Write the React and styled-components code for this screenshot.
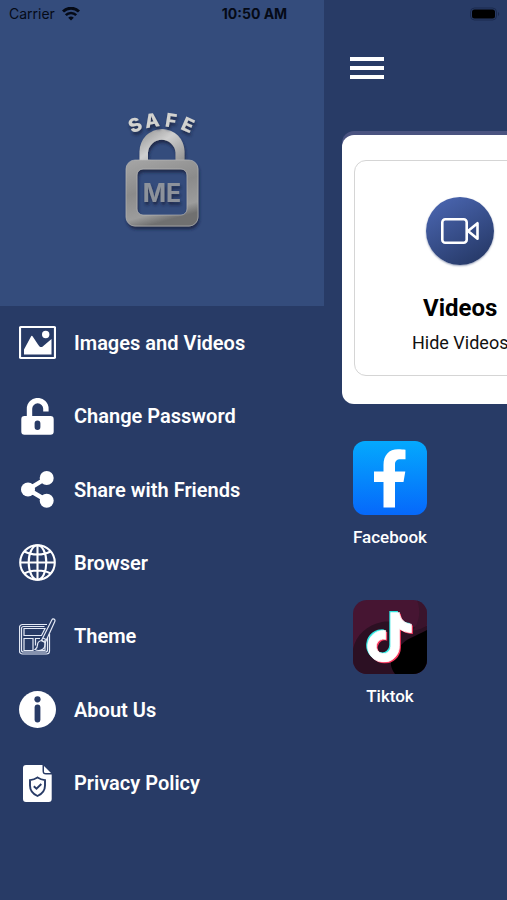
import React from 'react';
import { FaTiktok } from 'react-icons/fa';
import styled, { createGlobalStyle } from 'styled-components';

const MENU = [
  { label: 'Images and Videos', Icon: ImageIcon },
  { label: 'Change Password', Icon: UnlockIcon },
  { label: 'Share with Friends', Icon: ShareIcon },
  { label: 'Browser', Icon: GlobeIcon },
  { label: 'Theme', Icon: ThemeIcon },
  { label: 'About Us', Icon: InfoIcon },
  { label: 'Privacy Policy', Icon: PolicyIcon }
];

const APPS = [
  { name: 'Facebook', Icon: FacebookTile },
  { name: 'Tiktok', Icon: TiktokTile }
];

const App = () => {
  return (
    <Screen>
      <GlobalStyle />
      <StatusBar>
        <Carrier>
          Carrier
          <WifiIcon />
        </Carrier>
        <Clock>10:50 AM</Clock>
        <BatteryIcon />
      </StatusBar>
      <Drawer>
        <DrawerHeader>
          <Logo />
        </DrawerHeader>
        <Menu>
          {MENU.map(({ label, Icon }) => (
            <MenuItem key={label} type="button">
              <Icon />
              {label}
            </MenuItem>
          ))}
        </Menu>
      </Drawer>
      <Pushed>
        <Home>
          <MenuButton type="button" aria-label="Menu">
            <Bar />
            <Bar />
            <Bar />
          </MenuButton>
          <Panel>
            <VaultCard type="button">
              <VideoIcon />
              <VaultTitle>Videos</VaultTitle>
              <VaultText>Hide Videos</VaultText>
            </VaultCard>
          </Panel>
          <AppList>
            {APPS.map(({ name, Icon }) => (
              <AppLink key={name} href="#">
                <Icon />
                {name}
              </AppLink>
            ))}
          </AppList>
        </Home>
      </Pushed>
    </Screen>
  );
};

function WifiIcon() {
  return (
    <svg width="18" height="14" viewBox="0 0 18 14" fill="none" stroke="#050a16">
      <path d="M1 4.500a11.500 11.500 0 0 1 16 0" strokeWidth="3" />
      <path d="M3.800 8.200a7.400 7.400 0 0 1 10.400 0" strokeWidth="2.600" />
      <path d="M6.200 10.800a4 4 0 0 1 5.600 0L9 13.600z" fill="#050a16" stroke="none" />
    </svg>
  );
}

function BatteryIcon() {
  return (
    <svg width="30" height="14" viewBox="0 0 30 14">
      <rect x="0.500" y="1" width="26" height="12" rx="4" fill="none" stroke="#1b2a4e" />
      <rect x="2" y="2.500" width="23" height="9" rx="2.500" fill="#000" />
      <path d="M28 5v4c1.600-.5 1.600-3.500 0-4z" fill="#1b2a4e" />
    </svg>
  );
}

function Logo() {
  return (
    <svg width="90" height="130" viewBox="117 105 90 130">
      <defs>
        <linearGradient id="steel" x1="0" y1="0" x2="0.3" y2="1">
          <stop offset="0" stopColor="#a6a6a6" />
          <stop offset="0.5" stopColor="#8b8b8b" />
          <stop offset="0.85" stopColor="#9c9c9c" />
          <stop offset="1" stopColor="#6f6f6f" />
        </linearGradient>
        <linearGradient id="shackle" x1="0" y1="0" x2="1" y2="1">
          <stop offset="0" stopColor="#909090" />
          <stop offset="0.45" stopColor="#cfcfcf" />
          <stop offset="1" stopColor="#8f8f8f" />
        </linearGradient>
        <filter id="drop" x="-20%" y="-20%" width="140%" height="140%">
          <feDropShadow dx="1" dy="3" stdDeviation="1.5" floodColor="#15203c" floodOpacity="0.8" />
        </filter>
      </defs>
      <g filter="url(#drop)">
        <path
          d="M139.500 162v-10.500a22.500 22.500 0 0 1 45 0V162h-9v-9.500a13.800 13.800 0 0 0-27.500 0V162z"
          fill="url(#shackle)"
        />
        <path
          fillRule="evenodd"
          d="M135 160h54a9 9 0 0 1 9 9v48a9 9 0 0 1-9 9h-54a9 9 0 0 1-9-9v-48a9 9 0 0 1 9-9zM143 169a6 6 0 0 0-6 6v34a6 6 0 0 0 6 6h38a6 6 0 0 0 6-6v-34a6 6 0 0 0-6-6z"
          fill="url(#steel)"
          stroke="#bdbdbd"
          strokeWidth="0.600"
        />
      </g>
      <g
        fontFamily="Inter, sans-serif"
        fontWeight="700"
        textAnchor="middle"
        filter="url(#drop)"
      >
        <text x="162" y="202" fontSize="25" fill="#8d929b">ME</text>
        <g fontSize="19" fontWeight="800" fill="#d2d2cf">
          <text transform="translate(138 131) rotate(-25)">S</text>
          <text transform="translate(153 127) rotate(-9)">A</text>
          <text transform="translate(170 127) rotate(9)">F</text>
          <text transform="translate(185 131) rotate(24)">E</text>
        </g>
      </g>
    </svg>
  );
}

function ImageIcon() {
  return (
    <MenuSvg>
      <rect x="1" y="3" width="35" height="31" rx="1" fill="none" stroke="#fff" strokeWidth="2.200" />
      <path d="M5 30.500v-5l7-13c.5-.9 1.200-.9 1.700 0l5.300 8c1.500 2.300 3.200 3.600 5 1.700l8.500-7.200v15.500z" />
      <circle cx="26.700" cy="10.500" r="3.700" />
    </MenuSvg>
  );
}

function UnlockIcon() {
  return (
    <MenuSvg>
      <path
        d="M10.500 19v-8.200a8.200 8.200 0 0 1 16.400 0V13.500"
        fill="none"
        stroke="#fff"
        strokeWidth="5.400"
      />
      <path
        fillRule="evenodd"
        d="M5.500 18h26a3.200 3.200 0 0 1 3.200 3.200v12.300a3.200 3.200 0 0 1-3.200 3.200h-26a3.200 3.200 0 0 1-3.200-3.200V21.200A3.200 3.200 0 0 1 5.500 18zM15.600 25.500v3.500a2.900 2.900 0 0 0 5.800 0v-3.500a2.900 2.900 0 0 0-5.800 0z"
      />
    </MenuSvg>
  );
}

function ShareIcon() {
  return (
    <MenuSvg>
      <path d="M27.700 7L9 18.500l18.700 11" fill="none" stroke="#fff" strokeWidth="4.400" />
      <circle cx="9" cy="18.500" r="7" />
      <circle cx="27.700" cy="7" r="7" />
      <circle cx="27.700" cy="29.800" r="7" />
    </MenuSvg>
  );
}

function GlobeIcon() {
  return (
    <MenuSvg fill="none" stroke="#fff" strokeWidth="2.100">
      <circle cx="18.500" cy="18.500" r="17.300" />
      <ellipse cx="18.500" cy="18.500" rx="8.800" ry="17.300" />
      <path d="M18.500 1v35M1 18.500h35M5.500 7.500c7 4 19 4 26 0M5.500 29.500c7-4 19-4 26 0" />
    </MenuSvg>
  );
}

function ThemeIcon() {
  return (
    <MenuSvg fill="none" stroke="#e4e9f5" strokeWidth="1.200">
      <path d="M28 6.500H3.500a3 3 0 0 0-3 3v23.500a3 3 0 0 0 3 3h24a3 3 0 0 0 3-3V16" />
      <path d="M25.500 8.500H4.500a2 2 0 0 0-2 2v21.500a2 2 0 0 0 2 2h22a2 2 0 0 0 2-2V20" />
      <path d="M26 10.500H5v7h17.500zM5 20.500h9v12H5zM21 20.500h-4.500v7M26 22v10.500h-5" />
      <path d="M22.500 22.500L32.800 1.900c1-1.900 4-.6 3 1.500L26.300 24.500z" />
      <path d="M22.500 22.500c-2.500.5-4 2-4 4.500 0 2-.7 3.500-2.500 4.500 4 2.200 9 .5 9.800-3 .3-1.500.4-2.700.5-4z" />
      <path d="M24 20l3.500 1.800" />
    </MenuSvg>
  );
}

function InfoIcon() {
  return (
    <MenuSvg>
      <circle cx="18.500" cy="18.500" r="18.500" />
      <circle cx="18.500" cy="8.300" r="3.100" fill="#283b66" />
      <rect x="15.600" y="13.500" width="5.800" height="18" rx="2.900" fill="#283b66" />
    </MenuSvg>
  );
}

function PolicyIcon() {
  return (
    <MenuSvg>
      <path d="M7 0h16.500v6a3.500 3.500 0 0 0 3.500 3.500h5.700V34a3 3 0 0 1-3 3H7a3 3 0 0 1-3-3V3a3 3 0 0 1 3-3z" />
      <path d="M25 1l7 7h-5.500A1.500 1.500 0 0 1 25 6.500z" />
      <g fill="none" stroke="#283b66" strokeWidth="1.900">
        <path d="M18.500 12.500c2.300 1.500 4.600 2.300 7.500 2.600v5.400c0 5-3 8.500-7.500 10.500-4.500-2-7.500-5.500-7.500-10.500v-5.400c2.900-.3 5.200-1.100 7.500-2.600z" />
        <path d="M14.800 21.200l2.700 2.500 4.800-4.700" />
      </g>
    </MenuSvg>
  );
}

function VideoIcon() {
  return (
    <VideoCircle>
      <svg width="38" height="26" viewBox="0 0 38 26" fill="none" stroke="#fff" strokeWidth="2.600">
        <rect x="1.300" y="1.300" width="24.400" height="23.400" rx="3" />
        <path d="M27 13L36.500 5.200v15.600z" strokeLinejoin="round" />
      </svg>
    </VideoCircle>
  );
}

function FacebookTile() {
  return (
    <svg width="74" height="74" viewBox="0 0 74 74" aria-hidden="true">
      <defs>
        <linearGradient id="fb" x1="0" y1="0" x2="0" y2="1">
          <stop offset="0" stopColor="#04a9fd" />
          <stop offset="1" stopColor="#0668fb" />
        </linearGradient>
      </defs>
      <rect width="74" height="74" rx="12" fill="url(#fb)" />
      <path
        d="M30.500 66.500V41H21V30.500h9.500V24c0-10 5.500-15.800 14.500-15.800 3 0 5.500.2 7.500.5v9.600h-4.800c-4.200 0-5.700 2-5.700 5.400v6.800h10.300L50.500 41H42v25.500z"
        fill="#fff"
      />
    </svg>
  );
}

function TiktokTile() {
  return (
    <svg width="74" height="74" viewBox="0 0 74 74" aria-hidden="true">
      <clipPath id="tile">
        <rect width="74" height="74" rx="14" />
      </clipPath>
      <g clipPath="url(#tile)">
        <path d="M0 0h74v74H0z" fill="#461532" />
        <path d="M0 49C3 35 14 25 29 22c17-3 21 8 45 4v48H0z" fill="#2c1023" />
        <path d="M74 30c-12 7-22 8-28 18-5 9-13 13-4 26h32z" fill="#000" />
        <path d="M64 0c4 10 3 23-5 31 7-1 12-3 15-6V0z" fill="#3a142c" />
      </g>
      <FaTiktok x="10" y="11" size={50} color="#2ee6e0" />
      <FaTiktok x="13" y="13.500" size={50} color="#f7365c" />
      <FaTiktok x="11.500" y="12.200" size={50} color="#fff" stroke="#fff" strokeWidth="8" />
    </svg>
  );
}

const GlobalStyle = createGlobalStyle`
  body {
    margin: 0;
    background: #283b66;
  }
  * {
    box-sizing: border-box;
  }
  button {
    margin: 0;
    padding: 0;
    border: 0;
    background: none;
    font: inherit;
    color: inherit;
    cursor: pointer;
  }
`;

const Screen = styled.div`
  position: relative;
  display: flex;
  min-height: 100vh;
  overflow: hidden;
  background: #283b66;
  color: #fff;
  font-family: Roboto, sans-serif;
`;

const StatusBar = styled.div`
  position: absolute;
  top: 0;
  left: 0;
  right: 0;
  display: grid;
  grid-template-columns: 1fr auto 1fr;
  align-items: center;
  height: 27px;
  padding: 0 7px 0 9px;
  color: #050a16;
  font-family: Inter, sans-serif;
  font-size: 14px;

  > svg {
    justify-self: end;
  }
`;

const Carrier = styled.div`
  display: flex;
  align-items: center;
  gap: 7px;
`;

const Clock = styled.div`
  font-weight: 700;
`;

const Drawer = styled.nav`
  flex: 0 0 64%;
`;

const DrawerHeader = styled.div`
  display: flex;
  justify-content: center;
  height: 306px;
  padding-top: 105px;
  background: #344c7c;
`;

const Menu = styled.div`
  display: flex;
  flex-direction: column;
  height: 514px;
`;

const MenuItem = styled.button`
  flex: 1;
  display: flex;
  align-items: center;
  gap: 18px;
  && {
    padding: 0 19px;
    font-size: 20px;
    font-weight: 600;
  }
`;

const MenuSvg = styled.svg.attrs(props => ({
  viewBox: '0 0 37 37',
  fill: props.fill || '#fff',
  'aria-hidden': true
}))`
  flex: none;
  width: 37px;
  height: 37px;
`;

const Pushed = styled.main`
  flex: 1;
  min-width: 0;
  overflow: hidden;
`;

// keeps its full width while the drawer pushes it off to the right
const Home = styled.div`
  width: 100vw;
  padding: 57px 18px 0;
`;

const MenuButton = styled.button`
  display: flex;
  flex-direction: column;
  gap: 5px;
  width: 34px;
  && {
    margin: 0 8px;
  }
`;

const Bar = styled.span`
  height: 4px;
  background: #fff;
`;

const Panel = styled.section`
  display: grid;
  grid-template-columns: 1fr 1fr;
  gap: 24px;
  margin-top: 56px;
  padding: 25px 12px 28px;
  border-radius: 12px;
  background: #fff;
  box-shadow: 0 -4px 0 #4a5380;
`;

const VaultCard = styled.button`
  display: flex;
  flex-direction: column;
  align-items: center;
  height: 216px;
  && {
    padding-top: 36px;
    border: 1px solid #d5d5d5;
    border-radius: 12px;
    color: #111;
  }
`;

const VideoCircle = styled.span`
  display: flex;
  align-items: center;
  justify-content: center;
  width: 68px;
  height: 68px;
  border-radius: 50%;
  background: linear-gradient(150deg, #4d69b6, #22345f);
  box-shadow: 0 1px 2px #9aa3bb;
`;

const VaultTitle = styled.span`
  margin-top: 28px;
  color: #000;
  font-size: 24px;
  font-weight: 700;
  line-height: 30px;
`;

const VaultText = styled.span`
  margin-top: 8px;
  font-size: 18px;
  line-height: 24px;
`;

const AppList = styled.div`
  display: flex;
  flex-direction: column;
  align-items: flex-start;
  gap: 52px;
  padding: 37px 10px;
`;

const AppLink = styled.a`
  display: flex;
  flex-direction: column;
  align-items: center;
  gap: 11px;
  min-width: 75px;
  color: #fff;
  font-size: 17px;
  font-weight: 500;
  line-height: 22px;
  text-decoration: none;
`;

export default App;
